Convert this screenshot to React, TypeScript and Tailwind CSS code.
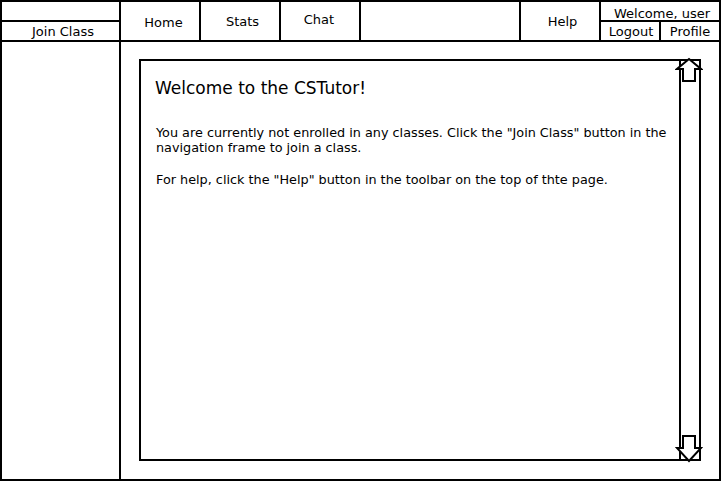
import React from "react";

function UpArrow() {
  return (
    <svg className="absolute left-[534px] top-[-5px]" width="28" height="28" viewBox="0 0 28 28">
      <polygon points="14,3 26,13 20,13 20,25 8,25 8,13 2,13" fill="white" stroke="black" strokeWidth="2" strokeLinejoin="miter" />
    </svg>
  );
}

function DownArrow() {
  return (
    <svg className="absolute left-[534px] top-[373px]" width="28" height="30" viewBox="0 0 28 30">
      <polygon points="8,2 20,2 20,14 26,14 14,27 2,14 8,14" fill="white" stroke="black" strokeWidth="2" strokeLinejoin="miter" />
    </svg>
  );
}

export default function App() {
  return (
    <div className="w-[721px] h-[481px] bg-black p-[2px] font-['DejaVu_Sans',sans-serif] text-[13px] leading-[15px] text-black">
      <div className="grid h-full grid-cols-[117px_1fr] grid-rows-[38px_1fr] gap-[2px]">
        {/* left header */}
        <div className="grid grid-rows-[18px_18px] gap-[2px]">
          <div className="bg-white" />
          <div className="flex items-center justify-center bg-white pl-[5px]">Join Class</div>
        </div>
        {/* right header */}
        <div className="flex gap-[2px]">
          <div className="flex w-[78px] items-center justify-center bg-white pl-[7px] pt-[3px]">Home</div>
          <div className="flex w-[78px] items-center justify-center bg-white pl-[5px]">Stats</div>
          <div className="flex w-[78px] items-center justify-center bg-white pr-[2px] pb-[3px]">Chat</div>
          <div className="w-[158px] bg-white" />
          <div className="flex w-[78px] items-center justify-center bg-white pl-[5px]">Help</div>
          <div className="grid flex-1 grid-rows-[18px_18px] gap-[2px]">
            <div className="flex items-center justify-center bg-white pl-[4px] pt-[4px]">Welcome, user</div>
            <div className="grid grid-cols-[58px_1fr] gap-[2px]">
              <div className="flex items-center justify-center bg-white pl-[2px]">Logout</div>
              <div className="flex items-center justify-center bg-white">Profile</div>
            </div>
          </div>
        </div>
        {/* left body */}
        <div className="bg-white" />
        {/* main body */}
        <div className="bg-white pt-[17px] pl-[18px] pr-[18px] pb-[18px]">
          <div className="relative flex h-full border-2 border-black">
            <div className="flex-1 pl-[14px] pr-[8px] pt-[17px]">
              <h1 className="text-[17px] leading-[20px]">Welcome to the CSTutor!</h1>
              <div className="text-[12.8px] leading-[15px]">
                <p className="mt-[27px] pl-[1px]">
                  You are currently not enrolled in any classes. Click the "Join Class" button in the navigation frame to join a class.
                </p>
                <p className="mt-[17px] pl-[1px]">
                  For help, click the "Help" button in the toolbar on the top of thte page.
                </p>
              </div>
            </div>
            <div className="w-[20px] border-l-2 border-black" />
            <UpArrow />
            <DownArrow />
          </div>
        </div>
      </div>
    </div>
  );
}
